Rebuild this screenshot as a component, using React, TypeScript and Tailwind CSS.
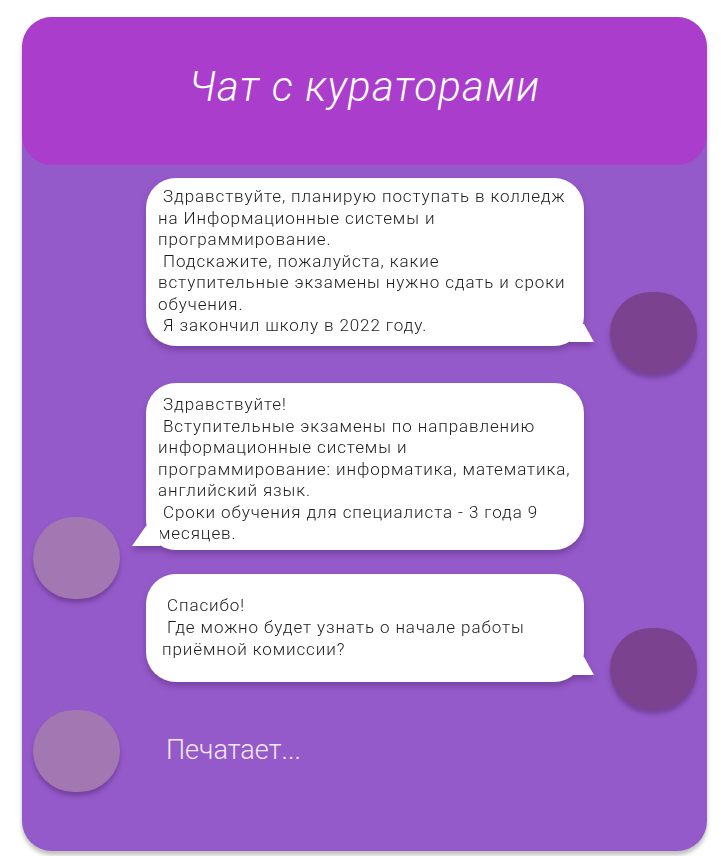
import React from "react";

const FONT = { fontFamily: "Roboto, 'Noto Sans', sans-serif" };

interface BubbleProps {
  lines: string[];
  side: "left" | "right";
  className: string;
  tailBottom: number;
}

function Tail({ side, bottom }: { side: "left" | "right"; bottom: number }) {
  if (side === "right") {
    return (
      <svg
        className="absolute right-[-10px] w-[24px] h-[20px]"
        style={{ bottom }}
        viewBox="0 0 24 20"
      >
        <polygon points="0,0 14,0 24,18 0,18" fill="#ffffff" />
      </svg>
    );
  }
  return (
    <svg
      className="absolute left-[-14px] w-[28px] h-[22px]"
      style={{ bottom }}
      viewBox="0 0 28 22"
    >
      <polygon points="28,0 14,0 0,20 28,20" fill="#ffffff" />
    </svg>
  );
}

function Bubble({ lines, side, className, tailBottom }: BubbleProps) {
  return (
    <div className="relative drop-shadow-[0_4px_3px_rgba(60,20,90,0.35)]">
      <div
        className={`relative rounded-[30px] bg-white text-[17px] tracking-[0.9px] leading-[21.5px] font-light text-[#1c1c1c] whitespace-pre ${className}`}
        style={FONT}
      >
        {lines.join("\n")}
      </div>
      <Tail side={side} bottom={tailBottom} />
    </div>
  );
}

function Avatar({ tone, className = "" }: { tone: "dark" | "light"; className?: string }) {
  return (
    <div
      className={`w-[87px] h-[82px] rounded-full shadow-[0_4px_4px_rgba(60,20,90,0.35)] ${
        tone === "dark" ? "bg-[#7b4290]" : "bg-[#a277b2]"
      } ${className}`}
    />
  );
}

export default function App() {
  return (
    <div className="w-[721px] h-[856px] bg-white pt-[17px] pl-[22px]">
      <div className="w-[685px] h-[834px] rounded-[30px] bg-[#955ac9] overflow-hidden shadow-[0_4px_4px_rgba(0,0,0,0.25)]">
        {/* Header */}
        <div className="h-[148px] rounded-[30px] bg-[#ab3dcd] flex items-center justify-center pb-[10px]">
          <h1 className="text-[42px] font-light italic text-white tracking-[1.2px]" style={FONT}>
            Чат с кураторами
          </h1>
        </div>

        <div className="pl-[11px] pr-[10px] pt-[13px]">
          {/* Message 1 */}
          <div className="grid grid-cols-[87px_438px_87px] gap-x-[26px]">
            <div />
            <Bubble
              side="right"
              tailBottom={2}
              className="h-[168px] pt-[8px] pl-[12px]"
              lines={[
                " Здравствуйте, планирую поступать в колледж",
                "на Информационные системы и",
                "программирование.",
                " Подскажите, пожалуйста, какие",
                "вступительные экзамены нужно сдать и сроки",
                "обучения.",
                " Я закончил школу в 2022 году.",
              ]}
            />
            <Avatar tone="dark" className="self-end mb-[-28px]" />
          </div>

          {/* Message 2 */}
          <div className="grid grid-cols-[87px_438px_87px] gap-x-[26px] mt-[37px]">
            <Avatar tone="light" className="self-end mb-[-49px]" />
            <Bubble
              side="left"
              tailBottom={2}
              className="h-[167px] pt-[11px] pl-[12px]"
              lines={[
                " Здравствуйте!",
                " Вступительные экзамены по направлению",
                "информационные системы и",
                "программирование: информатика, математика,",
                "английский язык.",
                " Сроки обучения для специалиста - 3 года 9",
                "месяцев.",
              ]}
            />
            <div />
          </div>

          {/* Message 3 */}
          <div className="grid grid-cols-[87px_438px_87px] gap-x-[26px] mt-[24px]">
            <div />
            <Bubble
              side="right"
              tailBottom={5}
              className="h-[108px] pt-[20px] pl-[16px] leading-[22px]"
              lines={[
                " Спасибо!",
                " Где можно будет узнать о начале работы",
                "приёмной комиссии?",
              ]}
            />
            <Avatar tone="dark" className="self-end mb-[-28px]" />
          </div>

          {/* Typing */}
          <div className="grid grid-cols-[87px_438px_87px] gap-x-[26px] mt-[28px] items-center">
            <Avatar tone="light" />
            <p
              className="pl-[20px] text-[27px] font-light text-[#f2e8f7] leading-none pb-[2px]"
              style={FONT}
            >
              Печатает...
            </p>
            <div />
          </div>
        </div>
      </div>
    </div>
  );
}
